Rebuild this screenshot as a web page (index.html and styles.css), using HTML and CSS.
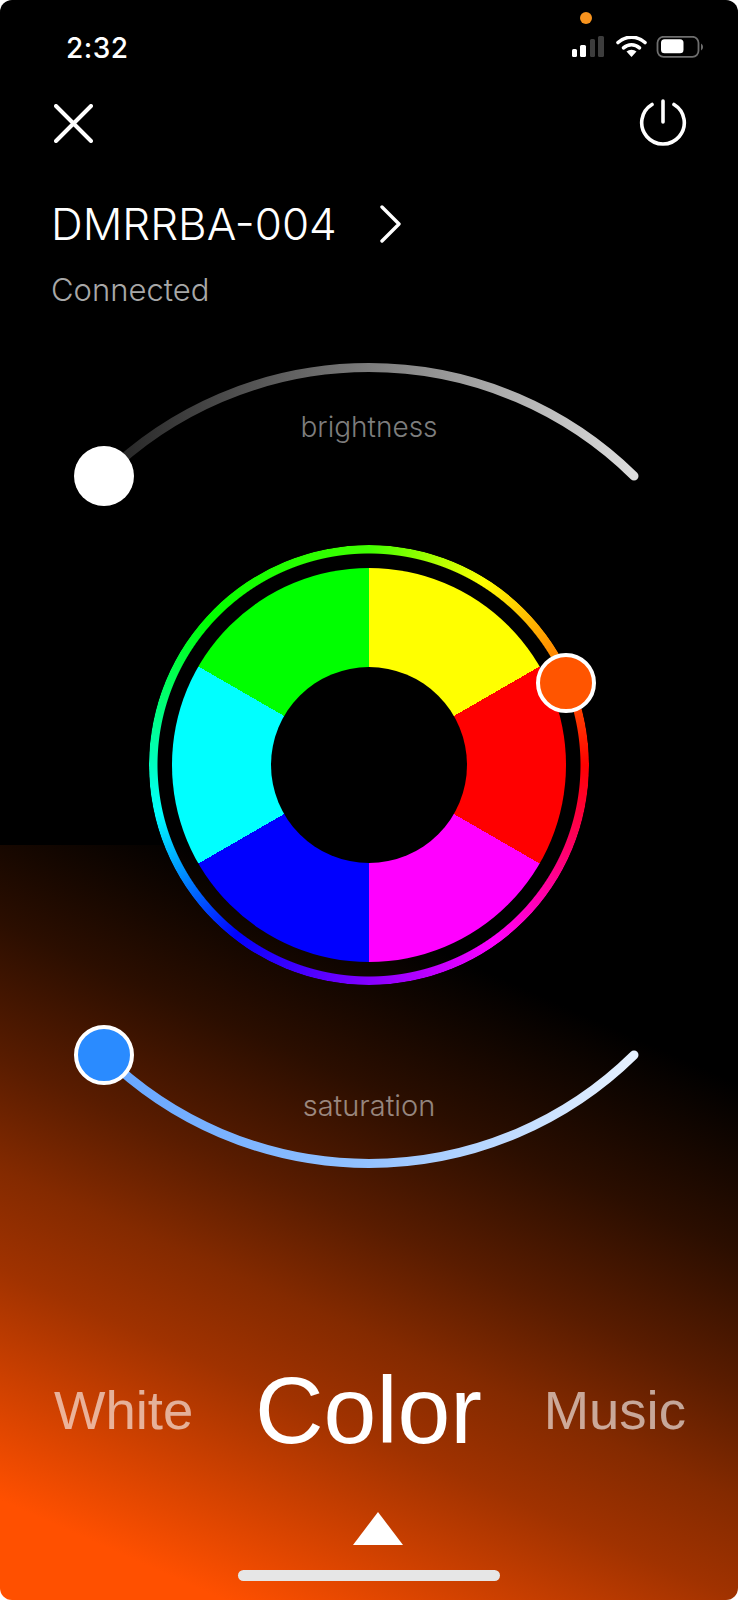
FILE: index.html
```html
<!DOCTYPE html>
<html>
 <head>
  <meta charset="utf-8">
  <link rel="stylesheet" href="styles.css">
 </head>
 <body>
  <div class="screen">
   <div class="status">
    <span class="time">2:32</span>
    <span class="mic-dot"></span>
    <svg class="status-icons" width="132" height="22" viewBox="0 0 132 22">
     <rect x="0" y="13" width="5" height="8" rx="1.5" fill="#fff"/>
     <rect x="8" y="9" width="6" height="12" rx="1.5" fill="#fff"/>
     <rect x="18" y="3" width="5" height="18" rx="1.5" fill="#3d3d3d"/>
     <rect x="26" y="0" width="6" height="21" rx="1.5" fill="#3d3d3d"/>
     <path d="M46 6.5a20 20 0 0 1 27 0" fill="none" stroke="#fff" stroke-width="3.6" stroke-linecap="round"/>
     <path d="M51.5 11.8a12 12 0 0 1 16 0" fill="none" stroke="#fff" stroke-width="3.6" stroke-linecap="round"/>
     <path d="M59.5 21l-5-5.4a7.4 7.4 0 0 1 10 0z" fill="#fff"/>
     <rect x="85.5" y="0.8" width="41" height="20" rx="6" fill="none" stroke="#6e6e6e" stroke-width="1.8"/>
     <rect x="89" y="3.3" width="22.5" height="14" rx="3.5" fill="#fff"/>
     <path d="M129 7.5a4 4 0 0 1 0 7z" fill="#6e6e6e"/>
    </svg>
   </div>
   <div class="topbar">
    <svg width="39" height="39" viewBox="0 0 39 39"><path d="M2 2l35 35M37 2L2 37" fill="none" stroke="#fff" stroke-width="4" stroke-linecap="round"/></svg>
    <svg width="48" height="50" viewBox="0 0 48 50"><path d="M13 6.5a21.3 21.3 0 1 0 22 0M24 3v21" fill="none" stroke="#fff" stroke-width="3.6" stroke-linecap="round"/></svg>
   </div>
   <div class="device">
    <span class="device-name">DMRRBA-004</span>
    <svg width="23" height="38" viewBox="0 0 23 38"><path d="M2 2l17 17L2 36" fill="none" stroke="#fff" stroke-width="3.4" stroke-linecap="round" stroke-linejoin="round"/></svg>
   </div>
   <div class="device-state">Connected</div>

   <div class="dial">
    <svg class="arcs" width="738" height="840" viewBox="0 0 738 840">
     <defs>
      <linearGradient id="bright" gradientUnits="userSpaceOnUse" x1="104" y1="0" x2="633" y2="0">
       <stop offset="0" stop-color="#222"/>
       <stop offset=".5" stop-color="#7c7c7c"/>
       <stop offset="1" stop-color="#dcdcdc"/>
      </linearGradient>
      <linearGradient id="sat" gradientUnits="userSpaceOnUse" x1="104" y1="0" x2="633" y2="0">
       <stop offset="0" stop-color="#65a5ff"/>
       <stop offset=".5" stop-color="#94c2ff"/>
       <stop offset="1" stop-color="#e6f1ff"/>
      </linearGradient>
     </defs>
     <path d="M104 126A378 378 0 0 1 634 126" fill="none" stroke="url(#bright)" stroke-width="9" stroke-linecap="round"/>
     <path d="M104 705A378 378 0 0 0 634 705" fill="none" stroke="url(#sat)" stroke-width="9" stroke-linecap="round"/>
    </svg>
    <div class="label label-bright">brightness</div>
    <div class="knob knob-bright"></div>
    <div class="ring"></div>
    <div class="wheel"><div class="hole"></div></div>
    <div class="knob knob-hue"></div>
    <div class="knob knob-sat"></div>
    <div class="label label-sat">saturation</div>
   </div>

   <div class="modes">
    <span class="mode">White</span>
    <span class="mode mode-on">Color</span>
    <span class="mode">Music</span>
   </div>
   <div class="caret"></div>
   <div class="home-bar"></div>
  </div>
 </body>
</html>
```
FILE: styles.css
```css
body {
  margin: 0;
  background: #fff;
  font-family: Inter, "Liberation Sans", sans-serif;
}
.screen {
  width: 738px;
  height: 1600px;
  border-radius: 12px;
  overflow: hidden;
  color: #fff;
  background-color: #000;
  background-image: linear-gradient(204deg, #000 22%, #2b0e00 37.4%, #591c00 50.1%, #842a00 60.4%, #a03200 69.5%, #ff5000 90.8%);
  background-size: 100% 755px;
  background-position: bottom;
  background-repeat: no-repeat;
  display: flex;
  flex-direction: column;
}

.status {
  height: 63px;
  padding: 0 34px 0 66px;
  display: flex;
  align-items: flex-end;
  justify-content: space-between;
  position: relative;
}
.time {
  font-size: 28px;
  font-weight: 500;
  letter-spacing: .5px;
  line-height: 30px;
}
.mic-dot {
  position: absolute;
  left: 580px;
  top: 12px;
  width: 12px;
  height: 12px;
  border-radius: 50%;
  background: #f7931e;
}
.status-icons {
  display: block;
  margin-bottom: 5px;
}

.topbar {
  margin-top: 35px;
  padding: 0 51px 0 54px;
  display: flex;
  justify-content: space-between;
  align-items: center;
}
.device {
  margin-top: 51px;
  padding-left: 51px;
  display: flex;
  align-items: center;
  gap: 43px;
}
.device-name {
  font-size: 44px;
  font-weight: 300;
  line-height: 50px;
}
.device-state {
  margin-top: 23px;
  padding-left: 51px;
  font-size: 31px;
  font-weight: 300;
  line-height: 36px;
  color: #a8a8a8;
}

/* dial area: arcs + wheel + knobs sit on one canvas */
.dial {
  position: relative;
  height: 840px;
  margin-top: 42px;
}
.arcs {
  position: absolute;
  left: 0;
  top: 0;
}
.label {
  position: absolute;
  left: 0;
  width: 738px;
  text-align: center;
  font-size: 28px;
  font-weight: 300;
  line-height: 30px;
}
.label-bright {
  top: 62px;
  color: #7d7d7d;
}
.label-sat {
  top: 741px;
  font-size: 29px;
  color: rgba(255, 255, 255, .5);
}
.knob {
  position: absolute;
  box-sizing: border-box;
  width: 60px;
  height: 60px;
  border-radius: 50%;
  background: #fff;
}
.knob-bright {
  left: 74px;
  top: 96px;
}
.knob-sat {
  left: 74px;
  top: 675px;
  background: #2a8bff;
  border: 4px solid #fff;
}
.knob-hue {
  left: 536px;
  top: 303px;
  background: #ff5500;
  border: 4px solid #fff;
}
.ring {
  position: absolute;
  left: 149px;
  top: 195px;
  width: 440px;
  height: 440px;
  border-radius: 50%;
  background: conic-gradient(#40ff00, #ff0 32deg, #f00 90deg, #f0f 145deg, #00f 218deg, #0ff 257deg, #0f0 312deg, #40ff00);
  -webkit-mask: radial-gradient(closest-side, transparent 211px, #000 212px);
  mask: radial-gradient(closest-side, transparent 211px, #000 212px);
}
.wheel {
  position: absolute;
  left: 172px;
  top: 218px;
  width: 394px;
  height: 394px;
  border-radius: 50%;
  background: conic-gradient(#ff0 0 60deg, #f00 60deg 120deg, #f0f 120deg 180deg, #00f 180deg 240deg, #0ff 240deg 300deg, #0f0 300deg 360deg);
  display: flex;
  align-items: center;
  justify-content: center;
}
.hole {
  width: 196px;
  height: 196px;
  border-radius: 50%;
  background: #000;
}

.modes {
  margin-top: 165px;
  height: 110px;
  padding: 0 52px 0 54px;
  display: flex;
  justify-content: space-between;
  align-items: center;
  font-family: "Liberation Sans", sans-serif;
}
.mode {
  font-size: 54.5px;
  color: rgba(255, 255, 255, .6);
}
.mode-on {
  font-size: 95px;
  color: #fff;
}
.caret {
  align-self: center;
  margin: 47px 0 0 17px;
  width: 0;
  height: 0;
  border-left: 25px solid transparent;
  border-right: 25px solid transparent;
  border-bottom: 33px solid #fff;
}
.home-bar {
  align-self: center;
  margin-top: 25px;
  width: 262px;
  height: 11px;
  border-radius: 6px;
  background: #e6e6e6;
}
```
